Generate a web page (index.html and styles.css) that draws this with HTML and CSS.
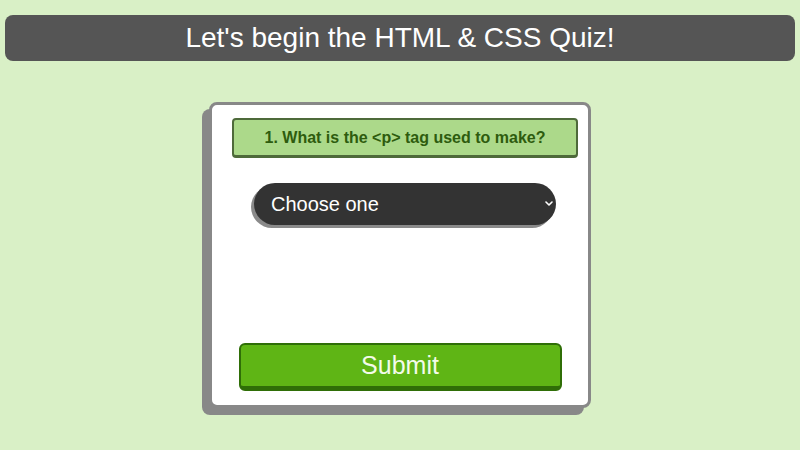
FILE: index.html
```html
<!DOCTYPE html>
<html>
<head>
<meta charset="utf-8">
<link rel="stylesheet" href="styles.css">
</head>
<body>
<header class="title-bar">Let's begin the HTML &amp; CSS Quiz!</header>
<main class="quiz-card">
  <div class="question">1. What is the &lt;p&gt; tag used to make?</div>
  <div class="answer-wrap">
    <select class="answer">
      <option>Choose one</option>
      <option>A paragraph</option>
      <option>A picture</option>
      <option>A page</option>
    </select>
    <svg class="chevron" width="8" height="5" viewBox="0 0 8 5"><path d="M1 1 L4 4 L7 1" fill="none" stroke="#ffffff" stroke-width="1.6" stroke-linecap="round" stroke-linejoin="round"/></svg>
  </div>
  <button class="submit" type="button">Submit</button>
</main>
</body>
</html>
```
FILE: styles.css
```css
html, body {
  margin: 0;
  padding: 0;
}
body {
  background: #d9f0c6;
  font-family: "Liberation Sans", Arial, sans-serif;
  padding: 15px 5px 0;
  height: 450px;
  box-sizing: border-box;
}
.title-bar {
  background: #555555;
  color: #ffffff;
  border-radius: 8px;
  height: 46px;
  display: flex;
  align-items: center;
  justify-content: center;
  font-size: 28px;
}
.quiz-card {
  box-sizing: border-box;
  width: 382px;
  height: 306px;
  margin: 41px auto 0;
  background: #ffffff;
  border: 3px solid #888888;
  border-radius: 8px;
  box-shadow: -7px 7px 0 #888888;
  display: flex;
  flex-direction: column;
  align-items: center;
  padding: 13px 0 14px;
}
.question {
  box-sizing: border-box;
  width: 346px;
  height: 40px;
  margin-left: 20px;
  align-self: flex-start;
  background: #acd98a;
  border: 2px solid #4e6a3a;
  border-bottom-width: 3px;
  border-radius: 4px;
  color: #2e5c0e;
  font-weight: bold;
  font-size: 16px;
  display: flex;
  align-items: center;
  justify-content: center;
}
.answer-wrap {
  position: relative;
  width: 302px;
  height: 42px;
  margin-top: 25px;
  margin-left: 10px;
}
.answer {
  appearance: none;
  -webkit-appearance: none;
  box-sizing: border-box;
  width: 100%;
  height: 100%;
  background: #333333;
  color: #ffffff;
  border: none;
  border-radius: 21px;
  box-shadow: -3px 3px 0 #8a8a8a;
  font-family: "Liberation Sans", Arial, sans-serif;
  font-size: 20px;
  padding: 0 20px 0 17px;
  outline: none;
}
.chevron {
  position: absolute;
  right: 3px;
  top: 18px;
  pointer-events: none;
}
.submit {
  box-sizing: border-box;
  width: 323px;
  height: 48px;
  margin-top: auto;
  background: #5fb515;
  color: #f3fbe9;
  border: 2px solid #2f6e07;
  border-bottom-width: 5px;
  border-radius: 6px;
  font-family: "Liberation Sans", Arial, sans-serif;
  font-size: 25px;
  padding: 0 0 1px;
}
```
